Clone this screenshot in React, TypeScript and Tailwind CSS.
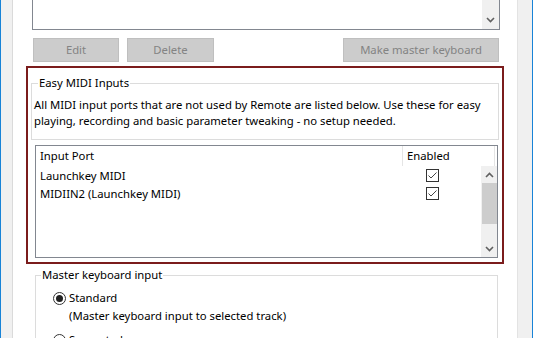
import React from "react";

const font = { fontFamily: '"Noto Sans", "Open Sans", sans-serif' };

function Chevron({ up }: { up?: boolean }) {
  return (
    <svg width="9" height="6" viewBox="0 0 9 6" className="block">
      <path
        d={up ? "M1 5 L4.5 1.5 L8 5" : "M1 1 L4.5 4.5 L8 1"}
        fill="none"
        stroke="#606060"
        strokeWidth="1.6"
      />
    </svg>
  );
}

function Check() {
  return (
    <div className="w-[13px] h-[13px] border border-[#333] bg-white flex items-center justify-center">
      <svg width="11" height="11" viewBox="0 0 11 11">
        <path d="M1.5 5.5 L4 8 L9.5 2.5" fill="none" stroke="#444" strokeWidth="1" />
      </svg>
    </div>
  );
}

function Button({ label, className }: { label: string; className: string }) {
  return (
    <div
      className={
        "h-[24px] bg-[#cccccc] border border-[#bfbfbf] text-[#838383] flex items-center justify-center " +
        className
      }
    >
      {label}
    </div>
  );
}

const ports = ["Launchkey MIDI", "MIDIIN2 (Launchkey MIDI)"];

export default function App() {
  return (
    <div className="w-[533px] h-[338px] overflow-hidden flex bg-[#f0f0f0] text-black text-[11.3px]" style={font}>
      <div className="w-[1px] bg-[#1883d7]" />
      <div className="w-[12px] border-r border-[#dadada]" />
      <div className="w-[505px] bg-white border-r border-[#e3e3e3] flex flex-col">
        {/* remote surfaces list (scrolled off top) */}
        <div className="shrink-0 ml-[19px] w-[468px] h-[30px] border-x border-b border-[#828790] flex justify-end">
          <div className="w-[17px] bg-[#f0f0f0] flex flex-col justify-end items-center pb-[6px]">
            <Chevron />
          </div>
        </div>

        <div className="shrink-0 mt-[8px] flex">
          <Button label="Edit" className="ml-[20px] w-[86px]" />
          <Button label="Delete" className="ml-[8px] w-[87px]" />
          <Button label="Make master keyboard" className="ml-[129px] w-[156px]" />
        </div>

        {/* Easy MIDI Inputs */}
        <div className="shrink-0 mt-[4px] ml-[13px] w-[478px] h-[198px] border-2 border-[#7b1c1c] flex flex-col">
          <fieldset className="shrink-0 mt-[7px] ml-[3px] w-[468px] h-[65px] border border-[#dcdcdc] pl-[2px]">
            <legend className="ml-[4px] px-[1px] leading-[16px]">Easy MIDI Inputs</legend>
            <p className="mt-[6px] leading-[16px] whitespace-nowrap">
              All MIDI input ports that are not used by Remote are listed below. Use these for easy
              <br />
              playing, recording and basic parameter tweaking - no setup needed.
            </p>
          </fieldset>

          <div className="shrink-0 mt-[5px] ml-[7px] w-[463px] h-[113px] border border-[#828790] flex flex-col">
            <div className="h-[20px] flex">
              <div className="w-[367px] pl-[4px] flex items-center border-r border-[#e5e5e5]">Input Port</div>
              <div className="w-[92px] pl-[4px] flex items-center border-r border-[#e5e5e5]">Enabled</div>
            </div>
            <div className="flex-1 flex">
              <div className="flex-1 flex flex-col">
                {ports.map((p) => (
                  <div key={p} className="h-[18px] flex items-center">
                    <div className="w-[367px] pl-[4px] pt-[2px]">{p}</div>
                    <div className="pl-[23px]">
                      <Check />
                    </div>
                  </div>
                ))}
              </div>
              <div className="w-[16px] bg-[#f0f0f0] flex flex-col items-center">
                <div className="h-[17px] flex items-center">
                  <Chevron up />
                </div>
                <div className="w-[15px] h-[41px] bg-[#cdcdcd]" />
                <div className="flex-1" />
                <div className="h-[17px] flex items-center">
                  <Chevron />
                </div>
              </div>
            </div>
          </div>
        </div>

        {/* Master keyboard input */}
        <fieldset className="shrink-0 mt-[3px] ml-[22px] w-[463px] h-[80px] border border-[#dcdcdc]">
          <legend className="ml-[5px] px-[1px] leading-[16px]">Master keyboard input</legend>
          <div className="mt-[7px] ml-[17px] flex items-center">
            <div className="w-[13px] h-[13px] rounded-full border border-[#333] flex items-center justify-center">
              <div className="w-[7px] h-[7px] rounded-full bg-[#222]" />
            </div>
            <span className="ml-[3px] leading-[16px]">Standard</span>
          </div>
          <div className="ml-[33px] mt-[2px] leading-[16px]">(Master keyboard input to selected track)</div>
          <div className="mt-[8px] ml-[17px] flex items-center">
            <div className="w-[13px] h-[13px] rounded-full border border-[#333]" />
            <span className="ml-[3px] leading-[16px]">Separated</span>
          </div>
        </fieldset>
      </div>
      <div className="flex-1" />
      <div className="w-[1px] bg-[#1883d7]" />
    </div>
  );
}
